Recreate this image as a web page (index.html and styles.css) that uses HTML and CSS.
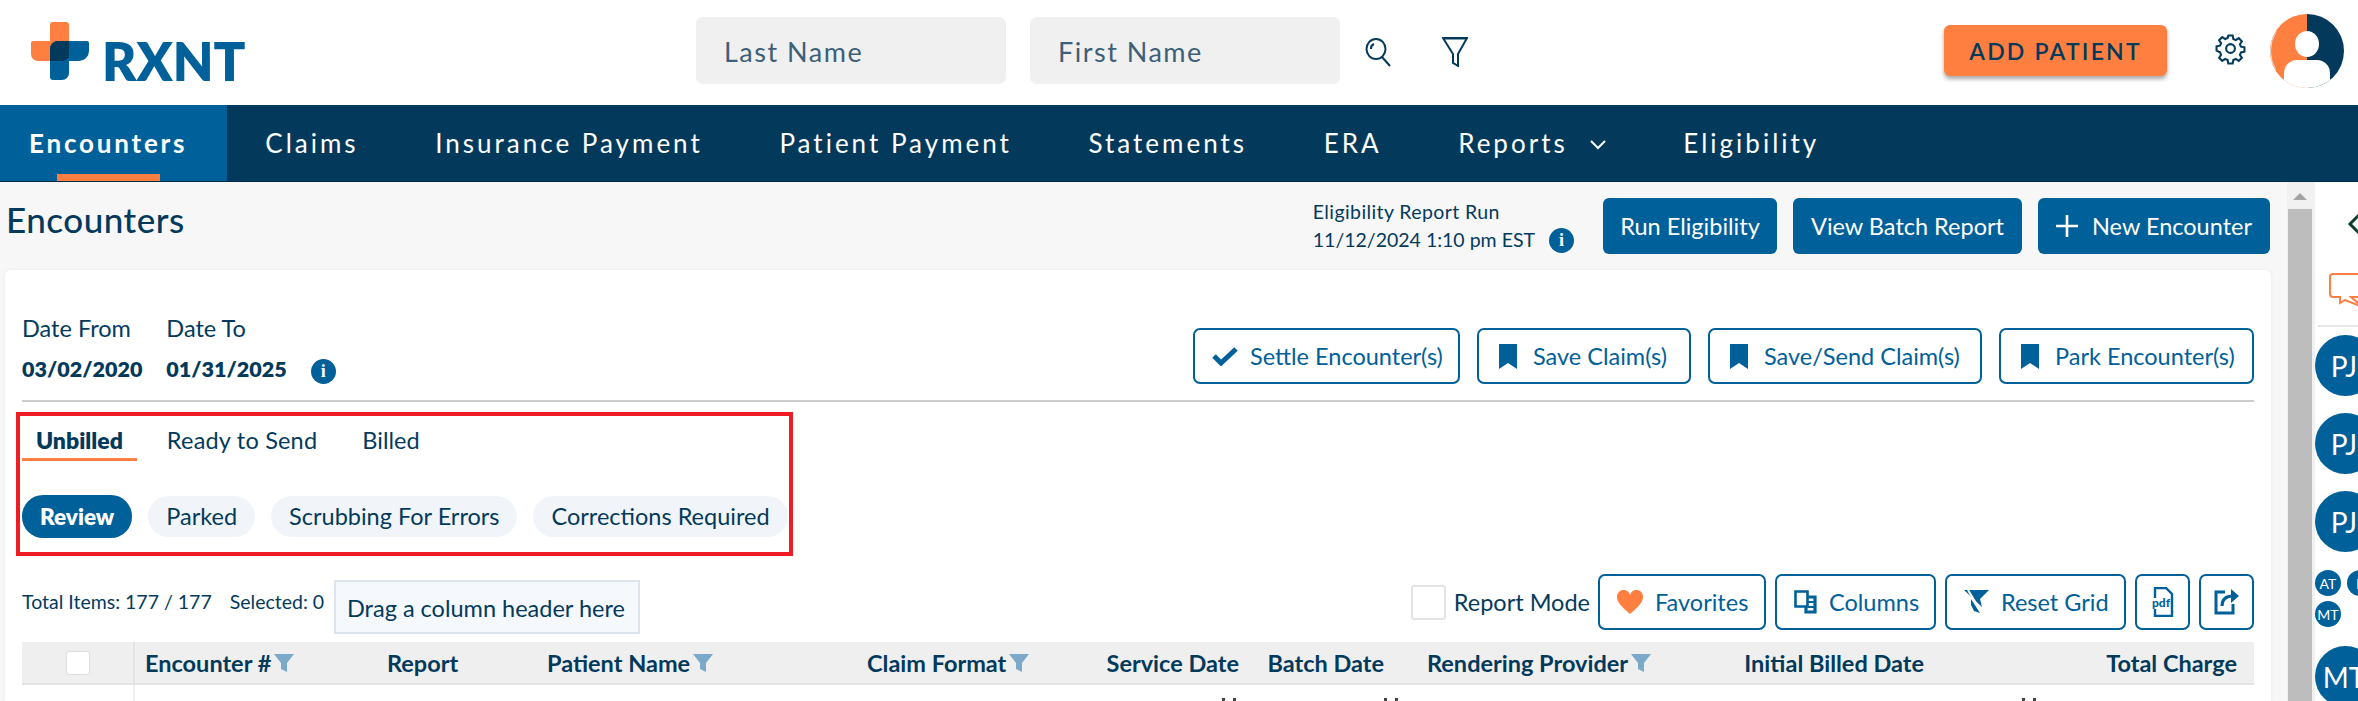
FILE: index.html
```html
<!DOCTYPE html>
<html lang="en">
<head>
<meta charset="utf-8">
<title>Encounters</title>
<link rel="stylesheet" href="styles.css">
</head>
<body>
<header class="top">
  <div class="logo">
    <svg class="logo-mark" width="58" height="58" viewBox="0 0 58 58"><path d="M19 19V3a3 3 0 0 1 3-3h13a3 3 0 0 1 3 3v36H7a7 7 0 0 1-7-7V21a2 2 0 0 1 2-2z" fill="#ff7f41"/><path d="M27 19h29a2 2 0 0 1 2 2v8a10 10 0 0 1-10 10H38v12a7 7 0 0 1-7 7H22a3 3 0 0 1-3-3V27a8 8 0 0 1 8-8z" fill="#00609a"/><path d="M27 19h11v13a7 7 0 0 1-7 7H19V27a8 8 0 0 1 8-8z" fill="#033a5c"/></svg>
    <span class="logo-text">RXNT</span>
  </div>
  <div class="search">
    <div class="field">Last Name</div>
    <div class="field">First Name</div>
    <svg class="search-icon" width="27" height="29" viewBox="0 0 27 29" fill="none" stroke="#033a5c" stroke-width="2"><ellipse cx="11" cy="11" rx="9.500" ry="10"/><path d="M17 19l8 9M6 11a5 5 0 0 1 3-5"/></svg>
    <svg class="filter-icon" width="26" height="30" viewBox="0 0 26 30" fill="none" stroke="#033a5c" stroke-width="2"><path d="M1 1h24L16 17v12l-3-2-2-1V17z"/><path d="M1 1h24" stroke-width="3"/></svg>
  </div>
  <button class="add">ADD PATIENT</button>
  <svg class="gear" width="31" height="33" viewBox="0 0 24 24" fill="none" stroke="#033a5c" stroke-width="1.600"><circle cx="12" cy="12" r="3.400"/><path d="M10.300 2h3.400l.5 2.700 1.900.8 2.300-1.500 2.400 2.400-1.500 2.300.8 1.900 2.700.5v3.400l-2.700.5-.8 1.900 1.500 2.300-2.400 2.400-2.300-1.500-1.900.8-.5 2.700h-3.400l-.5-2.700-1.900-.8-2.300 1.500-2.400-2.400 1.500-2.300-.8-1.900L1.200 13.700v-3.400l2.700-.5.8-1.900-1.500-2.300 2.400-2.400 2.300 1.500 1.900-.8z"/></svg>
  <svg class="avatar" width="74" height="76" viewBox="0 0 74 76"><defs><clipPath id="avatar-clip"><circle cx="37" cy="38" r="37"/></clipPath></defs><g clip-path="url(#avatar-clip)"><rect width="37" height="76" fill="#ff7f41"/><rect x="37" width="37" height="76" fill="#033a5c"/><ellipse cx="37" cy="31" rx="12" ry="13" fill="#fff"/><path d="M14 76V60a13 13 0 0 1 13-13h20a13 13 0 0 1 13 13v16z" fill="#fff"/></g><circle cx="37" cy="38" r="36.500" fill="none" stroke="#ddd" stroke-width="1" stroke-dasharray="40 300" stroke-dashoffset="-95"/></svg>
</header>
<nav class="nav">
  <a class="nav-item active">Encounters</a>
  <a class="nav-item">Claims</a>
  <a class="nav-item">Insurance Payment</a>
  <a class="nav-item">Patient Payment</a>
  <a class="nav-item">Statements</a>
  <a class="nav-item">ERA</a>
  <a class="nav-item">Reports<svg class="chev" width="18" height="11" viewBox="0 0 18 11" fill="none" stroke="#fff" stroke-width="2"><path d="M2 2l7 7 7-7"/></svg></a>
  <a class="nav-item">Eligibility</a>
</nav>
<div class="body-row">
  <main class="main">
    <div class="page-head">
      <h1>Encounters</h1>
      <div class="page-actions">
        <div class="elig"><span class="elig-title">Eligibility Report Run</span><br>11/12/2024 1:10 pm EST<span class="info small">i</span></div>
        <button class="solid w-run">Run Eligibility</button>
        <button class="solid w-view">View Batch Report</button>
        <button class="solid w-new"><svg width="22" height="22" viewBox="0 0 22 22" stroke="#fff" stroke-width="2.600"><path d="M11 0v22M0 11h22"/></svg>New Encounter</button>
      </div>
    </div>
    <section class="card">
      <div class="date-row">
        <div class="dates">
          <div class="date"><span>Date From</span><b>03/02/2020</b></div>
          <div class="date"><span>Date To</span><b>01/31/2025</b></div>
          <span class="info">i</span>
        </div>
        <div class="date-actions">
          <button class="outline w-settle"><svg width="26" height="20" viewBox="0 0 26 20" fill="none" stroke="#00609a" stroke-width="5"><path d="M2 10l7 7L24 3"/></svg>Settle Encounter(s)</button>
          <button class="outline w-save"><svg class="mark" width="20" height="25" viewBox="0 0 20 25"><path d="M1 0h18v25l-9-6-9 6z" fill="#00609a"/></svg>Save Claim(s)</button>
          <button class="outline w-send"><svg class="mark" width="20" height="25" viewBox="0 0 20 25"><path d="M1 0h18v25l-9-6-9 6z" fill="#00609a"/></svg>Save/Send Claim(s)</button>
          <button class="outline w-park"><svg class="mark" width="20" height="25" viewBox="0 0 20 25"><path d="M1 0h18v25l-9-6-9 6z" fill="#00609a"/></svg>Park Encounter(s)</button>
        </div>
      </div>
      <div class="highlight">
        <div class="tabs">
          <span class="tab active">Unbilled</span>
          <span class="tab ready">Ready to Send</span>
          <span class="tab">Billed</span>
        </div>
        <div class="pills">
          <span class="pill active">Review</span>
          <span class="pill">Parked</span>
          <span class="pill">Scrubbing For Errors</span>
          <span class="pill">Corrections Required</span>
        </div>
      </div>
      <div class="tools">
        <div class="totals"><span>Total Items: 177 / 177</span><span class="selected">Selected: 0</span></div>
        <div class="drag">Drag a column header here</div>
        <div class="tools-right">
          <span class="check big"></span><span class="report">Report Mode</span>
          <button class="outline w-fav"><svg width="26" height="24" viewBox="0 0 26 24"><path d="M13 24C4 16 0 12 0 7a6.600 6.600 0 0 1 13-2 6.600 6.600 0 0 1 13 2c0 5-4 9-13 17z" fill="#ff7f41"/></svg>Favorites</button>
          <button class="outline w-col"><svg width="23" height="24" viewBox="0 0 23 24" fill="none" stroke="#00609a" stroke-width="2.600"><path d="M1.500 1.500h12v15h-12z"/><path d="M14 7h7v15h-9v-5" stroke-width="3.200"/><path d="M14 12h7M14 17h7" stroke-width="2"/></svg>Columns</button>
          <button class="outline w-reset"><svg width="25" height="24" viewBox="0 0 25 24"><path d="M0 0h25l-9 9 2 8z" fill="#00609a"/><path d="M7 9l9 14-6-2-3-6z" fill="#00609a"/><path d="M4 0l12 20" stroke="#fff" stroke-width="2"/></svg>Reset Grid</button>
          <button class="outline icon"><svg width="22" height="30" viewBox="0 0 22 30"><path d="M3 1h11l6 6v22H3z" fill="none" stroke="#00609a" stroke-width="2.400"/><rect x="0" y="11" width="17" height="11" fill="#fff"/><text x="0" y="20" class="pdf">pdf</text></svg></button>
          <button class="outline icon"><svg width="26" height="26" viewBox="0 0 26 26" fill="none" stroke="#00609a" stroke-width="3"><path d="M11 3H2v21h17v-9"/><path d="M8 17c0-7 4-10 11-10"/><path d="M17 0l8 7-8 7z" fill="#00609a" stroke="none"/></svg></button>
        </div>
      </div>
      <div class="grid-head">
        <div class="cell c-check"><span class="check"></span></div>
        <div class="cell c-enc">Encounter #<svg class="funnel" viewBox="0 0 20 18"><path d="M0 0h20l-7 9v9l-6-3V9z"/></svg></div>
        <div class="cell c-rep">Report</div>
        <div class="cell c-pat">Patient Name<svg class="funnel" viewBox="0 0 20 18"><path d="M0 0h20l-7 9v9l-6-3V9z"/></svg></div>
        <div class="cell c-fmt">Claim Format<svg class="funnel" viewBox="0 0 20 18"><path d="M0 0h20l-7 9v9l-6-3V9z"/></svg></div>
        <div class="cell c-svc">Service Date</div>
        <div class="cell c-bat">Batch Date</div>
        <div class="cell c-ren">Rendering Provider<svg class="funnel" viewBox="0 0 20 18"><path d="M0 0h20l-7 9v9l-6-3V9z"/></svg></div>
        <div class="cell c-ini">Initial Billed Date</div>
        <div class="cell c-tot">Total Charge</div>
      </div>
      <div class="grid-row">
        <div class="row-check"></div>
        <span class="cal cal-a"></span>
        <span class="cal cal-b"></span>
        <span class="cal cal-c"></span>
      </div>
    </section>
  </main>
  <div class="scrollbar"><div class="scroll-up"></div><div class="scroll-thumb"></div></div>
  <aside class="side">
    <svg class="back" width="14" height="24" viewBox="0 0 14 24" fill="none" stroke="#0d3b2e" stroke-width="3"><path d="M12 3L3 12l9 9"/></svg>
    <svg class="chat" width="40" height="36" viewBox="0 0 40 36" fill="#fff" stroke="#ff7f41" stroke-width="2"><path d="M5 1h26a3 3 0 0 1 3 3v17a3 3 0 0 1-3 3h-8l12 10-18-7-5 3v-6H5a3 3 0 0 1-3-3V4a3 3 0 0 1 3-3z"/></svg>
    <div class="side-rule"></div>
    <div class="bubble">PJ</div>
    <div class="bubble">PJ</div>
    <div class="bubble">PJ</div>
    <div class="minis"><span class="mini">AT</span><span class="mini">F</span><span class="mini">MT</span></div>
    <div class="bubble">MT</div>
  </aside>
</div>
</body>
</html>
```
FILE: styles.css
```css
* { box-sizing: border-box; }
html, body { margin: 0; height: 701px; overflow: hidden; }
body { font-family: "Lato", "Noto Sans", sans-serif; color: #033a5c; background: #fff; font-size: 23.5px; }
button { font-family: inherit; cursor: pointer; }

.top { height: 105px; display: flex; align-items: center; background: #fff; padding-bottom: 4px; }
.logo { display: flex; align-items: flex-start; margin-left: 31px; width: 665px; flex: none; }
.logo-mark { flex: none; }
.logo-text { font-size: 52.5px; font-weight: 800; color: #00609a; line-height: 39px; margin: 19px 0 0 13px; }
.search { display: flex; align-items: center; gap: 24px; width: 1248px; flex: none; }
.field { width: 310px; height: 67px; border-radius: 7px; background: #f0f0f0; font-size: 27px; letter-spacing: 1.5px; line-height: 69px; padding-left: 28px; color: #3d5f78; }
.search-icon { margin: 3px 0 0 1px; }
.filter-icon { margin: 3px 0 0 26px; }
.add { width: 223px; height: 51px; border: 0; border-radius: 6px; background: #ff7f41; color: #033a5c; font-size: 23px; font-weight: 600; letter-spacing: 2.2px; box-shadow: 0 3px 4px rgba(0,0,0,.35); flex: none; }
.gear { margin: 0 0 4px 48px; flex: none; }
.avatar { margin-left: 24px; flex: none; }

.nav { height: 77px; background: #033a5c; display: flex; align-items: stretch; border-bottom: 1px solid #012a44; }
.nav-item { color: #fff; font-size: 26px; letter-spacing: 3px; padding: 0 38.3px; line-height: 76px; white-space: nowrap; }
.nav-item.active { background: #00609a; font-weight: 700; letter-spacing: 2.8px; width: 227px; padding: 0 0 0 29px; position: relative; }
.nav-item.active::after { content: ""; position: absolute; left: 57px; bottom: 0; width: 103px; height: 7px; background: #ff7f41; }
.chev { margin-left: 21px; vertical-align: 3px; }

.body-row { display: flex; height: 519px; }
.main { width: 2287px; background: #f7f7f7; padding-left: 5px; flex: none; overflow: hidden; }
.page-head { display: flex; justify-content: space-between; height: 88px; padding-right: 17px; }
h1 { margin: 0; font-size: 35px; font-weight: 500; line-height: 38px; padding: 18px 0 0 1px; letter-spacing: .5px; }
.page-actions { display: flex; gap: 16px; padding-top: 16px; }
.elig { font-size: 19.5px; line-height: 28px; margin-right: 13px; white-space: nowrap; }
.elig-title { letter-spacing: .4px; }
.solid { height: 56px; padding: 0; border: 0; border-radius: 6px; background: #00609a; color: #fff; font-size: 23.5px; display: flex; align-items: center; justify-content: center; gap: 14px; white-space: nowrap; }
.w-run { width: 174px; }
.w-view { width: 229px; }
.w-new { width: 232px; }
.info { display: inline-flex; justify-content: center; align-items: center; width: 25px; height: 25px; border-radius: 50%; background: #00609a; color: #fff; font: 900 18px "Liberation Serif", serif; }
.info.small { margin-left: 14px; vertical-align: 1px; }

.card { background: #fff; margin-right: 16px; height: 431px; border-radius: 6px 6px 0 0; padding: 0 17px; box-shadow: 0 0 4px rgba(0,0,0,.06); }
.date-row { display: flex; justify-content: space-between; height: 132px; border-bottom: 2px solid #ccc; }
.dates { display: flex; gap: 24px; padding-top: 43px; }
.date { display: flex; flex-direction: column; gap: 11px; line-height: 30px; white-space: nowrap; }
.date b { font-weight: 800; font-size: 21.5px; }
.dates .info { align-self: flex-end; margin-bottom: 16px; }
.date-actions { display: flex; gap: 17px; padding-top: 58px; }
.outline { height: 56px; padding: 0 0 0 17px; border: 2px solid #00609a; border-radius: 7px; background: #fff; color: #00609a; font-size: 23.5px; display: flex; align-items: center; gap: 12px; white-space: nowrap; flex: none; }
.outline.icon { padding: 0; width: 55px; justify-content: center; }
.w-settle { width: 267px; }
.w-save { width: 214px; }
.w-send { width: 274px; }
.w-park { width: 255px; }
.w-fav { width: 168px; }
.w-col { width: 161px; }
.w-reset { width: 181px; }
.mark { margin: 0 3px 0 2px; }
.pdf { font: 900 12px "Lato", sans-serif; fill: #00609a; }

.highlight { margin: 10px 0 0 -6px; width: 777px; height: 144px; border: 4px solid #ee1c25; padding-left: 2px; }
.tabs { display: flex; gap: 15px; height: 45px; }
.tab { padding: 8px 15px 0; line-height: 32px; height: 45px; white-space: nowrap; }
.tab.ready { letter-spacing: .2px; }
.tab.active { font-weight: 800; font-size: 23px; padding: 8px 14px 0; border-bottom: 3px solid #ff7f41; }
.pills { display: flex; align-items: center; gap: 16px; margin-top: 34px; }
.pill { height: 41px; line-height: 41px; padding: 0 18px; border-radius: 21px; background: #f1f5f9; white-space: nowrap; }
.pill.active { background: #00609a; color: #fff; font-weight: 800; font-size: 22.5px; height: 43px; line-height: 43px; }

.tools { display: flex; align-items: flex-start; margin-top: 18px; height: 68px; }
.totals { font-size: 19.5px; line-height: 24px; width: 312px; padding-top: 16px; white-space: nowrap; flex: none; }
.selected { margin-left: 18px; }
.drag { width: 306px; height: 54px; margin-top: 6px; background: #f5f8fc; border: 2px solid #dde4ee; line-height: 52px; padding-left: 11px; white-space: nowrap; flex: none; }
.tools-right { margin-left: auto; display: flex; align-items: center; gap: 9px; }
.report { margin-left: -1px; margin-right: -1px; white-space: nowrap; }
.check { display: block; width: 24px; height: 24px; background: #fff; border: 1px solid #ddd; border-radius: 3px; }
.check.big { width: 35px; height: 35px; border: 2px solid #e4e4e4; flex: none; }
.grid-head { display: flex; height: 43px; background: #efefef; border-bottom: 2px solid #e4e4e4; font-weight: 700; font-size: 23.5px; white-space: nowrap; }
.cell { flex: none; display: flex; align-items: center; height: 41px; }
.c-check { width: 113px; justify-content: center; border-right: 2px solid #e4e4e4; }
.c-enc { width: 252px; padding-left: 10px; }
.c-rep { width: 160px; }
.c-pat { width: 320px; }
.c-fmt { width: 200px; }
.c-svc { width: 172px; justify-content: flex-end; }
.c-bat { width: 145px; justify-content: flex-end; }
.c-ren { width: 321px; padding-left: 43px; }
.c-ini { width: 219px; justify-content: flex-end; }
.c-tot { flex: 1; justify-content: flex-end; padding-right: 17px; }
.funnel { width: 20px; height: 18px; fill: #7aa9c9; margin-left: 3px; }
.grid-row { height: 16px; display: flex; align-items: flex-end; }
.row-check { width: 113px; height: 16px; border-right: 2px solid #efefef; flex: none; }
.cal { width: 14px; height: 3px; flex: none; border-left: 3px solid #444; border-right: 3px solid #444; }
.cal-a { margin-left: 1087px; }
.cal-b { margin-left: 148px; }
.cal-c { margin-left: 624px; }

.scrollbar { width: 28px; flex: none; background: #f1f1f1; padding: 0 3px 0 1px; }
.scroll-up { height: 27px; position: relative; }
.scroll-up::after { content: ""; position: absolute; left: 5px; top: 11px; border: 7px solid transparent; border-top: 0; border-bottom: 7px solid #a3a3a3; }
.scroll-thumb { height: 492px; background: #bdbdbd; }
.side { flex: 1; background: #fff; padding-top: 30px; overflow: hidden; display: flex; flex-direction: column; align-items: flex-start; min-width: 0; }
.back { margin-left: 32px; flex: none; }
.chat { margin: 37px 0 0 13px; flex: none; }
.side-rule { width: 40px; height: 2px; background: #e6e6e6; margin: 16px 0 0 3px; flex: none; }
.bubble { flex: none; width: 61px; height: 61px; border-radius: 50%; background: #00609a; color: #fff; font-size: 28px; display: flex; align-items: center; justify-content: center; padding-right: 3px; margin-bottom: 17px; }
.side-rule + .bubble { margin-top: 8px; }
.minis { flex: none; display: flex; flex-wrap: wrap; gap: 5px 6px; width: 61px; margin: 1px 0 19px; }
.mini { width: 26px; height: 26px; border-radius: 50%; background: #00609a; color: #fff; font-size: 14px; display: flex; align-items: center; justify-content: center; }
```
